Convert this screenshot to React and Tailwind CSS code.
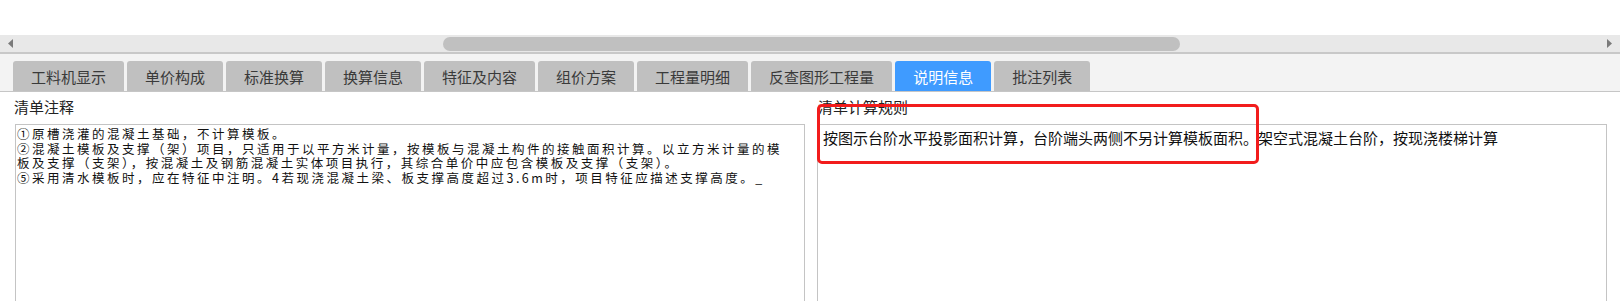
import React from 'react';

const tabs = [
  '工料机显示',
  '单价构成',
  '标准换算',
  '换算信息',
  '特征及内容',
  '组价方案',
  '工程量明细',
  '反查图形工程量',
  '说明信息',
  '批注列表',
];

const notes = [
  '①原槽浇灌的混凝土基础，不计算模板。',
  '②混凝土模板及支撑（架）项目，只适用于以平方米计量，按模板与混凝土构件的接触面积计算。以立方米计量的模',
  '板及支撑（支架），按混凝土及钢筋混凝土实体项目执行，其综合单价中应包含模板及支撑（支架）。',
  '⑤采用清水模板时，应在特征中注明。4若现浇混凝土梁、板支撑高度超过3.6m时，项目特征应描述支撑高度。_',
];

const cjk = { fontFamily: '"Noto Sans CJK SC", "Noto Sans", sans-serif' };

export default function App() {
  return (
    <div className="relative w-[1620px] h-[301px] overflow-hidden bg-white" style={cjk}>
      {/* top white gap */}
      <div className="h-[35px]" />

      {/* horizontal scrollbar */}
      <div className="h-[17px] bg-[#e8e8e8] flex items-center px-[8px]">
        <svg width="5" height="9" viewBox="0 0 5 9">
          <path d="M5 0 L0 4.5 L5 9 Z" fill="#7a7a7a" />
        </svg>
        <div className="flex-1 flex items-center">
          <div className="ml-[430px] w-[737px] h-[14px] rounded-full bg-[#c0c0c0]" />
        </div>
        <svg width="5" height="9" viewBox="0 0 5 9">
          <path d="M0 0 L5 4.5 L0 9 Z" fill="#7a7a7a" />
        </svg>
      </div>
      <div className="h-[2px] bg-[#c8c8c8]" />

      {/* tab strip */}
      <div className="h-[38px] bg-[#f3f3f3] border-b border-[#c6c6c6] flex items-end pl-[13px] gap-[3px]">
        {tabs.map((t) => {
          const active = t === '说明信息';
          return (
            <div
              key={t}
              className={
                'h-[30px] px-[18px] rounded-t-[3px] flex items-center text-[15px] leading-none ' +
                (active ? 'bg-[#3f9bff] text-white' : 'bg-[#c0c0c0] text-[#3a3a3a]')
              }
            >
              {t}
            </div>
          );
        })}
      </div>

      {/* content */}
      <div className="grid grid-cols-[791px_790px] gap-[12px] pl-[14px] pt-[5px]">
        <div>
          <div className="h-[27px] text-[15px] leading-[20px] text-[#222]">清单注释</div>
          <div className="ml-[1px] h-[180px] border border-[#c4c4c4] pt-[2px] pl-[1px] text-[12.5px] leading-[14.5px] tracking-[2.5px] text-[#111]">
            {notes.map((n, i) => (
              <div key={i} className="whitespace-nowrap">{n}</div>
            ))}
          </div>
        </div>
        <div>
          <div className="h-[27px] pl-[1px] text-[15px] leading-[20px] text-[#222]">清单计算规则</div>
          <div className="h-[180px] border border-[#c4c4c4] pt-[3px] pl-[5px] text-[15px] leading-[20px] text-[#111] whitespace-nowrap">
            按图示台阶水平投影面积计算，台阶端头两侧不另计算模板面积。架空式混凝土台阶，按现浇楼梯计算
          </div>
        </div>
      </div>

      {/* red annotation box */}
      <div className="absolute left-[817px] top-[104px] w-[442px] h-[60px] border-[3px] border-[#f21c1c] rounded-[5px]" />
    </div>
  );
}
